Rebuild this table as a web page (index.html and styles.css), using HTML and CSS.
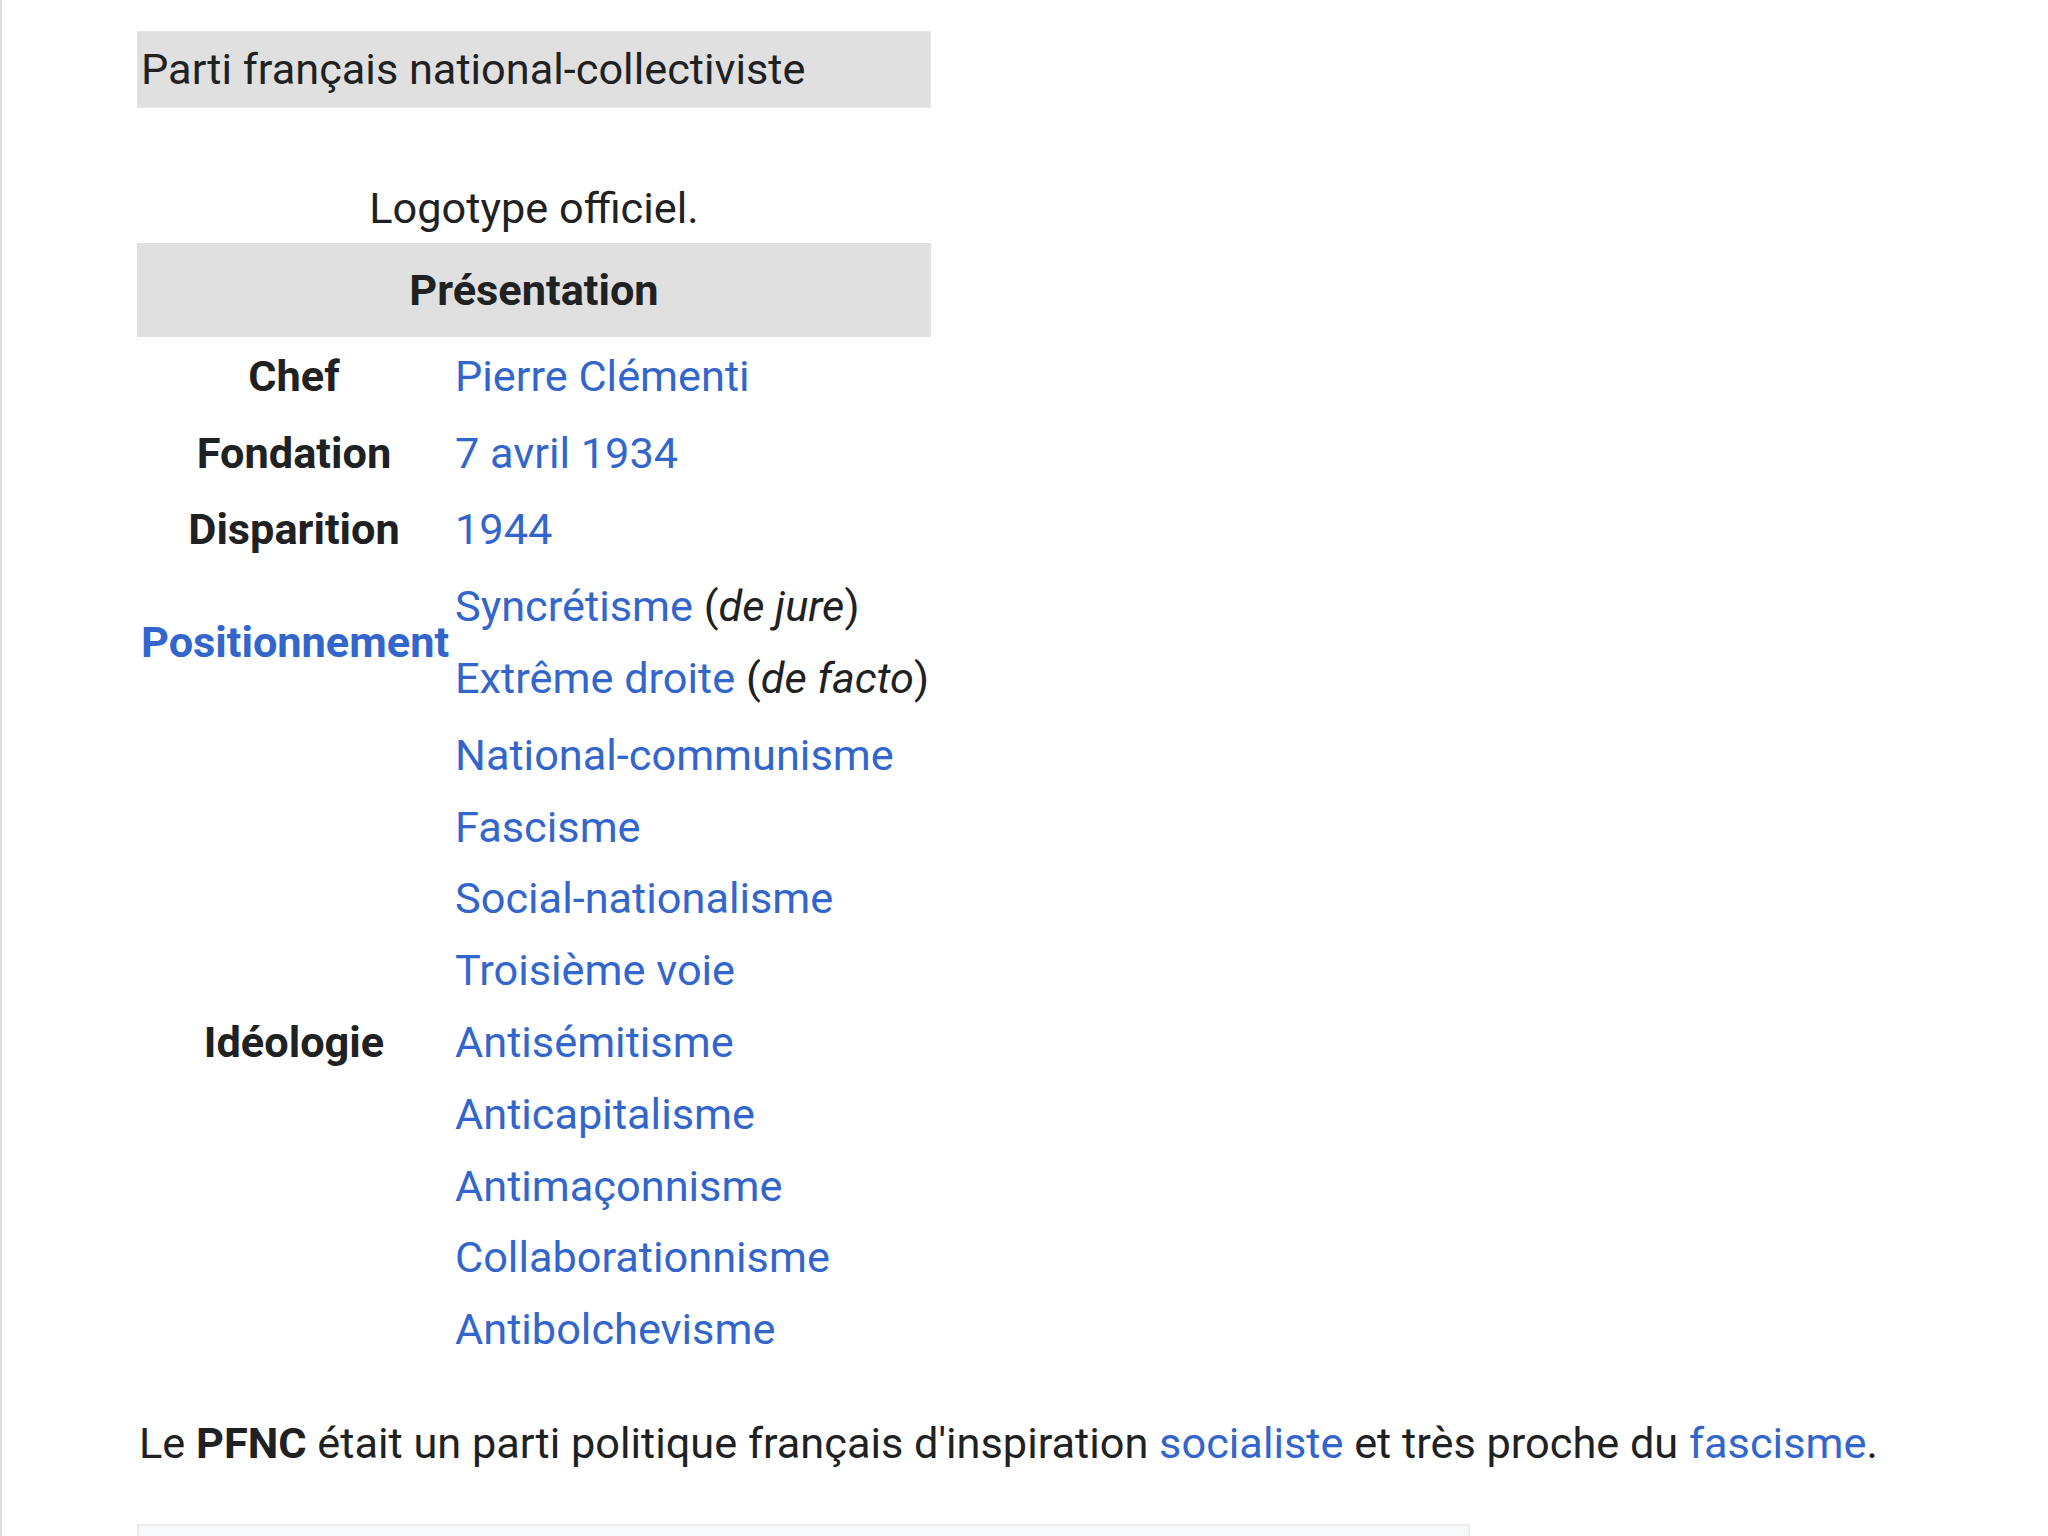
FILE: index.html
```html
<!DOCTYPE html>
<html lang="fr">
<head>
<meta charset="utf-8">
<title>Parti français national-collectiviste</title>
<link rel="stylesheet" href="styles.css">
</head>
<body>
<div class="page">
  <div class="infobox">
    <div class="title">Parti français national-collectiviste</div>
    <div class="caption">Logotype officiel.</div>
    <div class="section">Présentation</div>
    <div class="row">
      <div class="label">Chef</div>
      <div class="value"><a href="#">Pierre Clémenti</a></div>
    </div>
    <div class="row">
      <div class="label">Fondation</div>
      <div class="value"><a href="#">7 avril 1934</a></div>
    </div>
    <div class="row">
      <div class="label">Disparition</div>
      <div class="value"><a href="#">1944</a></div>
    </div>
    <div class="row">
      <div class="label"><a href="#" class="label-link">Positionnement</a></div>
      <div class="value">
        <div><a href="#">Syncrétisme</a> (<i>de jure</i>)</div>
        <div><a href="#">Extrême droite</a> (<i>de facto</i>)</div>
      </div>
    </div>
    <div class="row">
      <div class="label">Idéologie</div>
      <div class="value">
        <div><a href="#">National-communisme</a></div>
        <div><a href="#">Fascisme</a></div>
        <div><a href="#">Social-nationalisme</a></div>
        <div><a href="#">Troisième voie</a></div>
        <div><a href="#">Antisémitisme</a></div>
        <div><a href="#">Anticapitalisme</a></div>
        <div><a href="#">Antimaçonnisme</a></div>
        <div><a href="#">Collaborationnisme</a></div>
        <div><a href="#">Antibolchevisme</a></div>
      </div>
    </div>
  </div>
  <p class="intro">Le <b>PFNC</b> était un parti politique français d'inspiration <a href="#">socialiste</a> et très proche du <a href="#">fascisme</a>.</p>
  <div class="toc"></div>
</div>
</body>
</html>
```

FILE: styles.css
```css
html, body {
  margin: 0;
  padding: 0;
  background: #ffffff;
}

body {
  font-family: Roboto, "Liberation Sans", sans-serif;
  font-size: 43.3px;
  line-height: 71.8px;
  color: #202122;
}

a {
  color: #3366cc;
  text-decoration: none;
}

.page {
  min-height: 1536px;
  box-sizing: border-box;
  border-left: 2px solid #dcdcdc;
  padding: 31px 0 0 135px;
}

.infobox {
  width: 794px;
}

.title {
  background: #e0e0e0;
  padding: 2.5px 4px;
  box-shadow: inset 0 0 0 1px #e6e6e6;
}

.caption {
  text-align: center;
  margin-top: 65.6px;
}

.section {
  background: #e0e0e0;
  text-align: center;
  font-weight: bold;
  padding: 11.6px 6px 10.6px;
  margin-top: -2px;
}

.row {
  display: grid;
  grid-template-columns: 314px 1fr;
  padding: 3.7px 0 1.3px;
}

.label {
  align-self: center;
  text-align: center;
  font-weight: bold;
  padding: 0 4px;
  white-space: nowrap;
}

.label-link {
  color: #3366cc;
}

.value {
  padding: 0 4px;
  white-space: nowrap;
}

.intro {
  margin: 41px 0 0 0;
  padding: 0 0 0 2px;
}

.toc {
  margin-top: 44px;
  width: 1333px;
  height: 40px;
  box-sizing: border-box;
  background: #f8f9fa;
  border: 2px solid #eaecf0;
  border-bottom: none;
}
```
